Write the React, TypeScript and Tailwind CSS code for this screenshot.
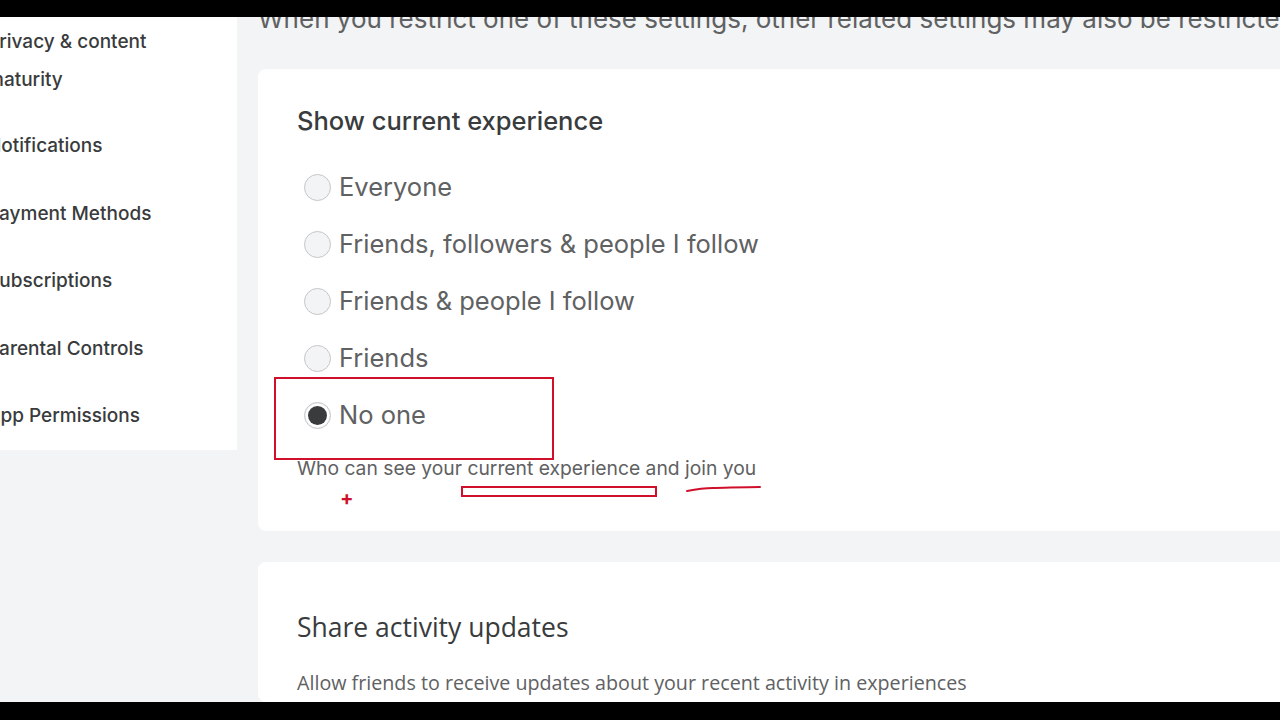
import React from "react";

const opts = [
  "Everyone",
  "Friends, followers & people I follow",
  "Friends & people I follow",
  "Friends",
  "No one",
];

function Radio({ checked }: { checked: boolean }) {
  return (
    <span className="w-[27px] h-[27px] rounded-full border-[1.5px] border-[#c4c6c8] bg-[#f2f4f5] flex items-center justify-center shrink-0">
      {checked && <span className="w-[19px] h-[19px] rounded-full bg-[#393b3d] ring-2 ring-white" />}
    </span>
  );
}

export default function App() {
  return (
    <div className="w-[1280px] h-[720px] bg-black flex flex-col overflow-hidden" style={{ fontFamily: "Inter, 'Liberation Sans', sans-serif" }}>
      <div className="h-[17px] shrink-0 bg-black" />
      <div className="h-[685px] shrink-0 bg-[#f2f4f5] flex overflow-hidden relative">
        {/* sidebar */}
        <div className="w-[237px] h-[433px] bg-white shrink-0 overflow-hidden">
          <div className="-ml-[13px] text-[19px] font-medium text-[#393b3d] leading-none whitespace-nowrap">
            <div className="pt-[15px]">Privacy &amp; content</div>
            <div className="mt-[19px]">maturity</div>
            <div className="mt-[47px]">Notifications</div>
            <div className="mt-[49px]">Payment Methods</div>
            <div className="mt-[48px]">Subscriptions</div>
            <div className="mt-[49px]">Parental Controls</div>
            <div className="mt-[48px]">App Permissions</div>
          </div>
        </div>
        {/* main */}
        <div className="flex-1 pl-[21px] flex flex-col min-w-0">
          <div className="-mt-[13px] h-[30px] text-[26px] text-[#606162] whitespace-nowrap leading-[30px]">
            When you restrict one of these settings, other related settings may also be restricted
          </div>
          <div className="mt-[35px] h-[462px] shrink-0 bg-white rounded-l-[8px] pl-[39px] pt-[38px] relative">
            <div className="text-[25.5px] font-medium text-[#393b3d] leading-[28px] whitespace-nowrap">Show current experience</div>
            <div className="mt-[38px] flex flex-col gap-[29px] pl-[7px]">
              {opts.map((o, i) => (
                <div key={o} className="flex items-center gap-[8px] h-[28px]">
                  <Radio checked={i === 4} />
                  <span className="text-[25.5px] text-[#606162] leading-none whitespace-nowrap">{o}</span>
                </div>
              ))}
            </div>
            <div className="mt-[30px] text-[19.3px] text-[#606162] leading-none whitespace-nowrap">
              Who can see your current experience and join you
            </div>
            {/* red annotations */}
            <div className="absolute left-[16px] top-[308px] w-[280px] h-[83px] border-2 border-[#d0102a]" />
            <div className="absolute left-[203px] top-[417px] w-[196px] h-[11px] border-2 border-[#d0102a]" />
            <svg className="absolute left-[425px] top-[412px]" width="80" height="14" viewBox="0 0 80 14">
              <path d="M4 10 C 14 8, 20 7, 30 7 S 60 6, 77 6" stroke="#d0102a" strokeWidth="2" fill="none" strokeLinecap="round" />
            </svg>
            <div className="absolute left-[82px] top-[419px] text-[#d0102a] text-[20px] leading-none font-bold">+</div>
          </div>
          <div className="mt-[31px] flex-1 bg-white rounded-l-[8px] pl-[39px] pt-[51px]">
            <div className="text-[26.5px] text-[#393b3d] leading-[28px] whitespace-nowrap" style={{ fontFamily: "'Open Sans', sans-serif" }}>Share activity updates</div>
            <div className="mt-[32px] text-[19.7px] text-[#606162] leading-none whitespace-nowrap" style={{ fontFamily: "'Open Sans', sans-serif" }}>
              Allow friends to receive updates about your recent activity in experiences
            </div>
          </div>
        </div>
      </div>
      <div className="h-[18px] shrink-0 bg-black" />
    </div>
  );
}
